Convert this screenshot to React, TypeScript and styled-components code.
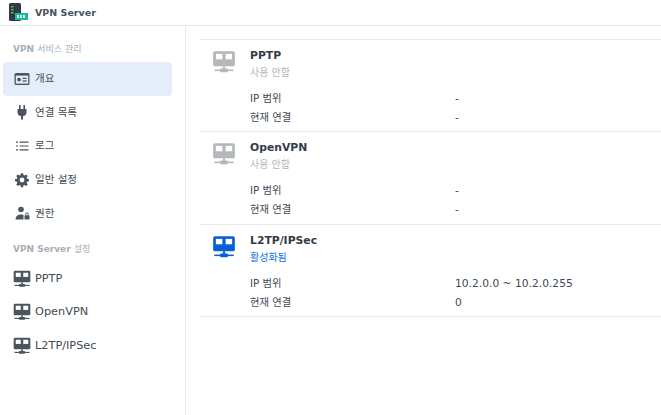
import styled, { createGlobalStyle } from "styled-components";

const GlobalStyle = createGlobalStyle`
    html, body {
        margin: 0;
        padding: 0;
        background: #fff;
    }
    body {
        font-family: "DejaVu Sans", "Noto Sans CJK KR", sans-serif;
        color: #414b55;
    }
`;

const Page = styled.div`
    width: 661px;
    height: 415px;
    overflow: hidden;
    display: flex;
    flex-direction: column;
`;

const Header = styled.header`
    height: 25px;
    flex: none;
    display: flex;
    align-items: center;
    gap: 6px;
    padding-left: 9px;
    border-bottom: 1px solid #e3e8ee;
`;

const HeaderTitle = styled.span`
    font-size: 9.5px;
    font-weight: 700;
    color: #4a545e;
`;

const Body = styled.div`
    flex: 1;
    display: flex;
    min-height: 0;
`;

const Sidebar = styled.nav`
    width: 186px;
    flex: none;
    box-sizing: border-box;
    border-right: 1px solid #e8ecf1;
    padding: 16px 13px 0 3px;
`;

const SectionLabel = styled.div<{ $gap?: number }>`
    height: 14px;
    line-height: 14px;
    padding-left: 10px;
    margin-top: ${(p) => p.$gap ?? 0}px;
    margin-bottom: 6px;
    font-size: 9px;
    font-weight: 700;
    color: #a9afb6;

    span {
        font-weight: 400;
    }
`;

const MenuItem = styled.div<{ $active?: boolean }>`
    height: 33.6px;
    display: flex;
    align-items: center;
    gap: 3px;
    padding-left: 9px;
    border-radius: 4px;
    background: ${(p) => (p.$active ? "#e4eefa" : "transparent")};
`;

const MenuText = styled.span<{ $latin?: boolean }>`
    font-size: ${(p) => (p.$latin ? "11.3px" : "10.5px")};
    line-height: 14px;
    margin-top: ${(p) => (p.$latin ? "0" : "-1px")};
    color: #414b55;
`;

const MenuIcon = styled.svg`
    width: 20px;
    height: 20px;
    flex: none;
`;

const Content = styled.main`
    flex: 1;
    min-width: 0;
    padding: 13px 0 0 13px;
`;

const Service = styled.section`
    height: 92.33px;
    box-sizing: border-box;
    border-top: 1px solid #e6eaef;
    display: flex;
    flex-direction: column;

    &:last-child {
        height: 93px;
        border-bottom: 1px solid #e6eaef;
    }
`;

const ServiceHead = styled.div`
    display: flex;
    flex: none;
    padding: 8px 0 0 12px;
    height: 35px;
`;

const ServiceIcon = styled.svg`
    width: 26px;
    height: 26px;
    flex: none;
    margin-right: 13px;
    margin-top: 1px;
`;

const ServiceName = styled.div`
    font-size: 10.8px;
    font-weight: 700;
    line-height: 14px;
    margin-top: 1px;
    color: #333c46;
`;

const ServiceStatus = styled.div<{ $on?: boolean }>`
    font-size: 10px;
    line-height: 14px;
    margin-top: 3px;
    color: ${(p) => (p.$on ? "#0a6fe0" : "#b1b6bc")};
`;

const InfoRows = styled.div`
    margin-top: 6px;
`;

const InfoRow = styled.div`
    display: grid;
    grid-template-columns: 205px 1fr;
    height: 19px;
    line-height: 19px;
    padding-left: 51px;
    font-size: 10.3px;
    color: #414b55;
`;

const InfoValue = styled.span`
    font-size: 10.7px;
`;

function ServerGlyph({ color, hole }: { color: string; hole: string }) {
    return (
        <>
            <rect x="2" y="2" width="20" height="14" rx="1.5" fill={color} />
            <rect x="4.5" y="4.5" width="6" height="5" fill={hole} />
            <rect x="13.5" y="4.5" width="6" height="5" fill={hole} />
            <rect x="11" y="16" width="2" height="3" fill={color} />
            <rect x="3" y="19" width="18" height="1.4" fill={color} />
            <rect x="8.5" y="18" width="7" height="3.4" rx="0.6" fill={color} />
        </>
    );
}

function AppLogo() {
    return (
        <svg width="20" height="20" viewBox="0 0 20 20">
            <rect x="0" y="0" width="12" height="18" rx="1.5" fill="#2f3a44" />
            <rect x="2" y="3" width="2.5" height="1.4" fill="#57c84d" />
            <rect x="2" y="6" width="2.5" height="1.4" fill="#57c84d" />
            <rect x="2" y="9" width="2.5" height="1.4" fill="#57c84d" />
            <rect x="6" y="10" width="13" height="7" fill="#1fb6a6" />
            <rect x="8" y="12" width="1.8" height="3" fill="#e8fff9" />
            <rect x="11" y="12" width="1.8" height="3" fill="#e8fff9" />
            <rect x="14" y="12" width="1.8" height="3" fill="#e8fff9" />
        </svg>
    );
}

const ink = "#4a5560";

function IconOverview() {
    return (
        <MenuIcon viewBox="0 0 20 20">
            <rect x="2.5" y="4" width="15" height="12" rx="1.6" fill={ink} />
            <rect x="3.8" y="6.6" width="12.4" height="8" fill="#e4eefa" />
            <circle cx="7" cy="10.6" r="1.9" fill={ink} />
            <rect x="10.5" y="8.8" width="4.2" height="1.2" fill={ink} />
            <rect x="10.5" y="11.4" width="4.2" height="1.2" fill={ink} />
        </MenuIcon>
    );
}

function IconPlug() {
    return (
        <MenuIcon viewBox="0 0 20 20">
            <path
                d="M7 3h1.6v4h2.8V3H13v4h1.5v3.5c0 2-1.4 3.3-3.5 3.6V17.500H9v-3.400c-2.100-.3-3.500-1.600-3.500-3.600V7H7z"
                fill={ink}
            />
        </MenuIcon>
    );
}

function IconList() {
    return (
        <MenuIcon viewBox="0 0 20 20">
            <path
                d="M4 5.500h2v1.200H4zM7.500 5.500h9v1.200h-9zM4 9.400h2v1.200H4zM7.500 9.400h9v1.200h-9zM4 13.300h2v1.200H4zM7.500 13.300h9v1.200h-9z"
                fill={ink}
            />
        </MenuIcon>
    );
}

function IconGear() {
    return (
        <MenuIcon viewBox="-2.500 -2.500 25 25">
            <path
                fill={ink}
                fillRule="evenodd"
                d="M8.600 1.500h2.800l.4 2.400 1.300.6 2.100-1.400 2 2-1.400 2.100.5 1.300 2.400.4v2.800l-2.400.4-.5 1.300 1.400 2.100-2 2-2.100-1.400-1.300.5-.4 2.400H8.600l-.4-2.400-1.300-.5-2.100 1.400-2-2 1.400-2.100-.5-1.300-2.400-.4V8.800l2.400-.4.5-1.300-1.400-2.100 2-2 2.100 1.400 1.300-.6zM10 7a3 3 0 1 0 0 6 3 3 0 0 0 0-6z"
            />
        </MenuIcon>
    );
}

function IconUserLock() {
    return (
        <MenuIcon viewBox="0 0 20 20">
            <circle cx="9" cy="6.500" r="2.800" fill={ink} />
            <path d="M3.500 16.500c0-3.300 2.300-5 5.500-5 1 0 1.800.1 2.500.4v4.600z" fill={ink} />
            <rect x="12.500" y="12.300" width="5" height="4.200" rx=".6" fill={ink} />
            <path d="M13.700 12.300v-1a1.300 1.300 0 0 1 2.600 0v1" fill="none" stroke={ink} strokeWidth="1" />
        </MenuIcon>
    );
}

function IconServer() {
    return (
        <MenuIcon viewBox="0 0 24 24">
            <ServerGlyph color={ink} hole="#fff" />
        </MenuIcon>
    );
}

type ServiceInfo = {
    name: string;
    status: string;
    on?: boolean;
    range: string;
    connections: string;
};

const services: ServiceInfo[] = [
    { name: "PPTP", status: "사용 안함", range: "-", connections: "-" },
    { name: "OpenVPN", status: "사용 안함", range: "-", connections: "-" },
    { name: "L2TP/IPSec", status: "활성화됨", on: true, range: "10.2.0.0 ~ 10.2.0.255", connections: "0" },
];

export default function App() {
    return (
        <Page>
            <GlobalStyle />
            <Header>
                <AppLogo />
                <HeaderTitle>VPN Server</HeaderTitle>
            </Header>
            <Body>
                <Sidebar>
                    <SectionLabel>VPN <span>서비스 관리</span></SectionLabel>
                    <MenuItem $active><IconOverview /><MenuText>개요</MenuText></MenuItem>
                    <MenuItem><IconPlug /><MenuText>연결 목록</MenuText></MenuItem>
                    <MenuItem><IconList /><MenuText>로그</MenuText></MenuItem>
                    <MenuItem><IconGear /><MenuText>일반 설정</MenuText></MenuItem>
                    <MenuItem><IconUserLock /><MenuText>권한</MenuText></MenuItem>
                    <SectionLabel $gap={12}>VPN Server <span>설정</span></SectionLabel>
                    <MenuItem><IconServer /><MenuText $latin>PPTP</MenuText></MenuItem>
                    <MenuItem><IconServer /><MenuText $latin>OpenVPN</MenuText></MenuItem>
                    <MenuItem><IconServer /><MenuText $latin>L2TP/IPSec</MenuText></MenuItem>
                </Sidebar>
                <Content>
                    {services.map((s) => (
                        <Service key={s.name}>
                            <ServiceHead>
                                <ServiceIcon viewBox="0 0 24 24">
                                    <ServerGlyph color={s.on ? "#0a5fd6" : "#b5b8bb"} hole="#fff" />
                                </ServiceIcon>
                                <div>
                                    <ServiceName>{s.name}</ServiceName>
                                    <ServiceStatus $on={s.on}>{s.status}</ServiceStatus>
                                </div>
                            </ServiceHead>
                            <InfoRows>
                                <InfoRow><span>IP 범위</span><InfoValue>{s.range}</InfoValue></InfoRow>
                                <InfoRow><span>현재 연결</span><InfoValue>{s.connections}</InfoValue></InfoRow>
                            </InfoRows>
                        </Service>
                    ))}
                </Content>
            </Body>
        </Page>
    );
}
